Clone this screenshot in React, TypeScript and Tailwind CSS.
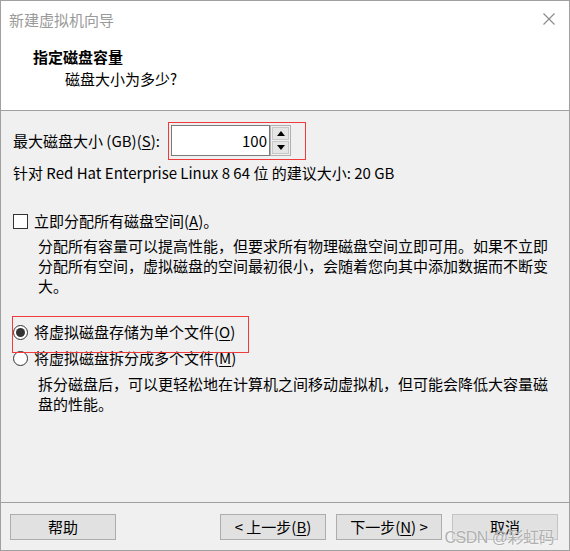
import React from "react";

function Radio({ checked }: { checked?: boolean }) {
  return (
    <span className="w-[15px] h-[15px] rounded-full border border-[#333333] bg-white flex items-center justify-center shrink-0">
      {checked && <span className="w-[9px] h-[9px] rounded-full bg-[#333333]" />}
    </span>
  );
}

function Btn({ children, light }: { children: React.ReactNode; light?: boolean }) {
  return (
    <div
      className={
        "w-[106px] h-[26px] bg-[#e1e1e1] border flex items-center justify-center " +
        (light ? "border-[#c4c4c4]" : "border-[#adadad]")
      }
    >
      {children}
    </div>
  );
}

export default function App() {
  return (
    <div className="w-[570px] h-[551px] border border-[#a0a0a0] bg-[#f0f0f0] flex flex-col font-['Noto_Sans_CJK_SC',sans-serif] text-[15px] leading-[20px] text-black overflow-hidden">
      {/* Header */}
      <div className="h-[110px] shrink-0 bg-white border-b border-[#a0a0a0] flex flex-col">
        <div className="flex items-start pt-[9px] pl-[8px] pr-[14px]">
          <span className="text-[#9a9a9a]">新建虚拟机向导</span>
          <svg className="ml-auto mt-[3px]" width="12" height="12" viewBox="0 0 12 12">
            <path d="M0.5 0.5 L11.5 11.5 M11.5 0.5 L0.5 11.5" stroke="#8a8a8a" strokeWidth="1.1" fill="none" />
          </svg>
        </div>
        <div className="pl-[32px] mt-[17px] font-bold">指定磁盘容量</div>
        <div className="pl-[64px] mt-[2px]">磁盘大小为多少?</div>
      </div>

      {/* Body */}
      <div className="flex-1 flex flex-col">
        <div className="flex items-center mt-[11px] pl-[12px]">
          <span className="w-[155px] whitespace-nowrap">
            最大磁盘大小 (GB)(<span className="underline underline-offset-2">S</span>):
          </span>
          <div className="w-[138px] h-[38px] border border-[#ef3b3b] p-[2px] flex items-start">
            <div className="w-[99px] h-[31px] border border-[#7a7a7a] bg-white flex items-center justify-end pr-[2px]">
              100
            </div>
            <div className="w-[21px] h-[31px] border border-[#b0b0b0] bg-[#f0f0f0] flex flex-col p-[1px] gap-[1px]">
              <div className="flex-1 bg-[#e5e5e5] border border-[#c8c8c8] flex items-center justify-center">
                <svg width="8" height="5" viewBox="0 0 8 5">
                  <path d="M4 0 L8 5 L0 5 Z" fill="#000" />
                </svg>
              </div>
              <div className="flex-1 bg-[#e5e5e5] border border-[#c8c8c8] flex items-center justify-center">
                <svg width="8" height="5" viewBox="0 0 8 5">
                  <path d="M0 0 L8 0 L4 5 Z" fill="#000" />
                </svg>
              </div>
            </div>
          </div>
        </div>

        <div className="mt-[3px] pl-[12px] whitespace-nowrap">
          针对 Red Hat Enterprise Linux 8 64 位 的建议大小: 20 GB
        </div>

        <div className="mt-[28px] pl-[12px] flex items-center gap-[6px]">
          <span className="w-[15px] h-[15px] border border-[#333333] bg-white shrink-0" />
          <span className="whitespace-nowrap">
            立即分配所有磁盘空间(<span className="underline underline-offset-2">A</span>)。
          </span>
        </div>

        <div className="mt-[5px] pl-[37px] flex flex-col whitespace-nowrap">
          <span>分配所有容量可以提高性能，但要求所有物理磁盘空间立即可用。如果不立即</span>
          <span>分配所有空间，虚拟磁盘的空间最初很小，会随着您向其中添加数据而不断变</span>
          <span>大。</span>
        </div>

        <div className="mt-[26px] pl-[12px] flex items-center gap-[6px] relative">
          <Radio checked />
          <span className="whitespace-nowrap">
            将虚拟磁盘存储为单个文件(<span className="underline underline-offset-2">O</span>)
          </span>
          <div className="absolute left-[11px] -top-[6px] w-[237px] h-[37px] border border-[#ef3b3b] pointer-events-none" />
        </div>

        <div className="mt-[6px] pl-[12px] flex items-center gap-[6px]">
          <Radio />
          <span className="whitespace-nowrap">
            将虚拟磁盘拆分成多个文件(<span className="underline underline-offset-2">M</span>)
          </span>
        </div>

        <div className="mt-[6px] pl-[37px] flex flex-col whitespace-nowrap">
          <span>拆分磁盘后，可以更轻松地在计算机之间移动虚拟机，但可能会降低大容量磁</span>
          <span>盘的性能。</span>
        </div>
      </div>

      {/* Footer */}
      <div className="h-[48px] shrink-0 border-t border-[#a0a0a0] flex items-start pt-[11px] pl-[9px] pr-[11px] relative">
        <Btn>帮助</Btn>
        <div className="ml-auto flex gap-[10px]">
          <Btn>
            &lt; 上一步(<span className="underline underline-offset-2">B</span>)
          </Btn>
          <Btn>
            下一步(<span className="underline underline-offset-2">N</span>) &gt;
          </Btn>
          <Btn light>取消</Btn>
        </div>
        <div className="absolute right-[15px] bottom-[2px] text-[16px] leading-[20px] text-[#b0b0b0] font-['Liberation_Sans','Noto_Sans_CJK_SC',sans-serif] whitespace-nowrap tracking-[-0.5px] [text-shadow:0_0_2px_#ffffff]">
          CSDN @彩虹码
        </div>
      </div>
    </div>
  );
}
